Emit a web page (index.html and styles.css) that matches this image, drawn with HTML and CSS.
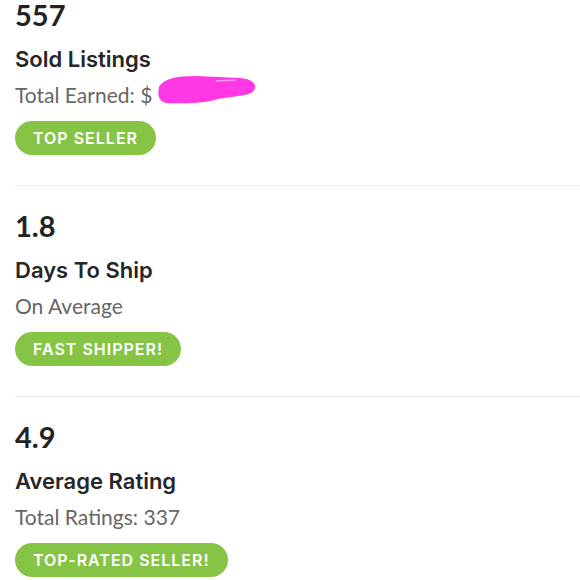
FILE: index.html
```html
<!DOCTYPE html>
<html lang="en">
<head>
<meta charset="utf-8">
<title>Seller Stats</title>
<link rel="stylesheet" href="styles.css">
</head>
<body>
<main class="stats">
  <section class="stat">
    <div class="stat-value">557</div>
    <div class="stat-title">Sold Listings</div>
    <div class="stat-sub">Total Earned: $<svg class="redact" viewBox="0 0 100 30" width="100" height="30" aria-hidden="true"><path d="M3 12 C7 4 20 1 40 1 L84 3 C95 4 100 8 99 13 C98 18 92 20 82 21 L62 24 C50 28 30 29 11 28 C4 27 1 22 3 12 Z" fill="#ff38e4"/><path d="M60 6 L80 5" stroke="#ff9cf2" stroke-width="1.5" fill="none"/></svg></div>
    <span class="badge">TOP SELLER</span>
  </section>
  <section class="stat">
    <div class="stat-value">1.8</div>
    <div class="stat-title">Days To Ship</div>
    <div class="stat-sub">On Average</div>
    <span class="badge">FAST SHIPPER!</span>
  </section>
  <section class="stat">
    <div class="stat-value">4.9</div>
    <div class="stat-title">Average Rating</div>
    <div class="stat-sub">Total Ratings: 337</div>
    <span class="badge">TOP-RATED SELLER!</span>
  </section>
</main>
</body>
</html>
```
FILE: styles.css
```css
html, body {
  margin: 0;
  padding: 0;
  background: #ffffff;
}
body {
  font-family: "Lato", "Liberation Sans", sans-serif;
  color: #222222;
  overflow: hidden;
}
.stats {
  margin-left: 15px;
}
.stat {
  display: flex;
  flex-direction: column;
  align-items: flex-start;
  padding: 25px 0 30px 0;
  border-bottom: 1px solid #efefed;
}
.stat:first-child {
  padding-top: 0;
}
.stat-value {
  font-size: 29px;
  font-weight: 700;
  line-height: 30px;
  color: #222222;
}
.stat-title {
  margin-top: 15px;
  font-family: "Inter", "Lato", sans-serif;
  font-size: 22px;
  font-weight: 600;
  line-height: 28px;
  color: #262626;
}
.stat-sub {
  position: relative;
  margin-top: 8px;
  font-size: 21px;
  font-weight: 400;
  line-height: 28px;
  color: #666666;
  white-space: nowrap;
}
.redact {
  position: absolute;
  left: 141px;
  top: -6px;
}
.badge {
  margin-top: 12px;
  height: 34px;
  line-height: 34px;
  padding: 0 18px;
  border-radius: 17px;
  background: #86c445;
  color: #ffffff;
  font-family: "Inter", "Lato", sans-serif;
  font-size: 16px;
  font-weight: 600;
  letter-spacing: 1px;
}
```
